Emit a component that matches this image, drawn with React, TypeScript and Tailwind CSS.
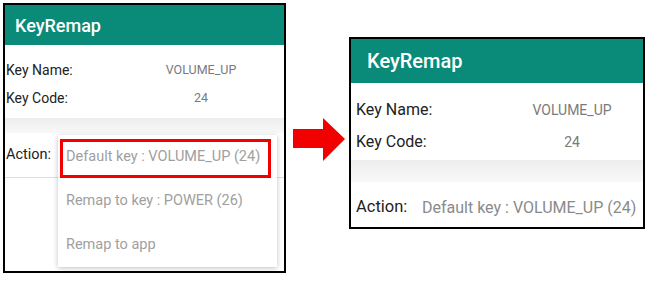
import React from "react";

const font = { fontFamily: "Roboto, 'Noto Sans', Arial, sans-serif" };

function Arrow() {
  return (
    <svg width="53" height="44" viewBox="0 0 53 44" className="ml-[6px] mt-[118px] shrink-0">
      <polygon points="1,11 31,11 31,0 53,21 31,43 31,30 1,30" fill="#f20000" />
    </svg>
  );
}

export default function App() {
  return (
    <div className="w-[651px] h-[282px] bg-white flex items-start overflow-hidden" style={font}>
      {/* Left panel */}
      <div className="relative ml-[3px] mt-[3px] w-[283px] h-[270px] border-2 border-black flex flex-col shrink-0 bg-white">
        <div className="h-[40px] bg-[#0a8a79] flex items-center pl-[10px] text-white text-[18px] font-medium">
          KeyRemap
        </div>
        <div className="pt-[11px] pb-[6px]">
          <div className="grid grid-cols-[140px_110px] h-[28px] items-center pl-[1px]">
            <span className="text-[14px] text-[#222]">Key Name:</span>
            <span className="text-[12.5px] text-[#7a7a7a] text-center">VOLUME_UP</span>
          </div>
          <div className="grid grid-cols-[140px_110px] h-[28px] items-center pl-[1px]">
            <span className="text-[14px] text-[#222]">Key Code:</span>
            <span className="text-[12.5px] text-[#7a7a7a] text-center">24</span>
          </div>
        </div>
        <div className="h-[15px] bg-gradient-to-b from-[#ededed] to-[#f8f8f8]" />
        <div className="h-[45px] flex items-center pl-[1px] border-b border-[#dcdcdc]">
          <span className="text-[14.5px] text-[#222]">Action:</span>
        </div>

        {/* Dropdown menu */}
        <div className="absolute left-[53px] top-[130px] w-[219px] h-[132px] bg-white shadow-[0_1px_5px_rgba(0,0,0,0.25)] flex flex-col">
          <div className="h-[44px] flex items-center pl-[8px] text-[14.5px] text-[#a0a0a0]">Default key : VOLUME_UP (24)</div>
          <div className="h-[44px] flex items-center pl-[8px] text-[14.5px] text-[#a0a0a0]">Remap to key : POWER (26)</div>
          <div className="h-[44px] flex items-center pl-[8px] text-[14.5px] text-[#a0a0a0]">Remap to app</div>
        </div>
        {/* Red highlight */}
        <div className="absolute left-[55px] top-[134px] w-[211px] h-[39px] border-[3px] border-[#f00000]" />
      </div>

      <Arrow />

      {/* Right panel */}
      <div className="ml-[4px] mt-[37px] w-[296px] h-[192px] border-2 border-black flex flex-col shrink-0 bg-white">
        <div className="h-[44px] bg-[#0a8a79] flex items-center pl-[16px] text-white text-[20px] font-medium">
          KeyRemap
        </div>
        <div className="pt-[11px] pb-[2px]">
          <div className="grid grid-cols-[156px_120px] h-[32px] items-center pl-[5px]">
            <span className="text-[16px] text-[#222]">Key Name:</span>
            <span className="text-[14px] text-[#7a7a7a] text-center">VOLUME_UP</span>
          </div>
          <div className="grid grid-cols-[156px_120px] h-[32px] items-center pl-[5px]">
            <span className="text-[16px] text-[#222]">Key Code:</span>
            <span className="text-[14px] text-[#7a7a7a] text-center">24</span>
          </div>
        </div>
        <div className="h-[22px] bg-gradient-to-b from-[#ededed] to-[#f8f8f8]" />
        <div className="flex-1 flex items-center pl-[5px] pt-[6px]">
          <span className="w-[66px] text-[16.5px] text-[#222]">Action:</span>
          <span className="text-[16px] text-[#8a8a8a]">Default key : VOLUME_UP (24)</span>
        </div>
      </div>
    </div>
  );
}
